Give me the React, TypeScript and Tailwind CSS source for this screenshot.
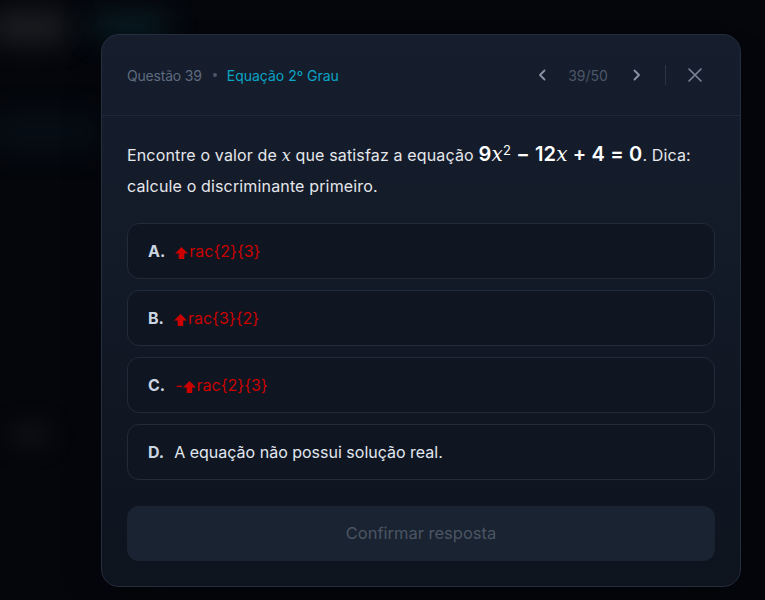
const font = { fontFamily: 'Inter, "Noto Sans", sans-serif' };

function Arrow() {
  return (
    <svg viewBox="0 0 14 13" className="inline-block w-[13px] h-[12px] -mb-[1px] mr-[1px]" fill="#cc0000">
      <path d="M7 0 L14 7 L10 7 L10 13 L4 13 L4 7 L0 7 Z" />
    </svg>
  );
}

function Frac({ a, b, neg }: { a: string; b: string; neg?: boolean }) {
  return (
    <span className="text-[#cc0000]">
      {neg && '-'}
      <Arrow />
      rac{'{'}{a}{'}'}{'{'}{b}{'}'}
    </span>
  );
}

function MathX() {
  return <span className="italic font-normal" style={{ fontFamily: '"DejaVu Serif", serif' }}>x</span>;
}

function Chevron({ dir }: { dir: 'left' | 'right' }) {
  return (
    <svg viewBox="0 0 8 12" className="w-[8px] h-[12px]" fill="none" stroke="#8a94a6" strokeWidth={1.8} strokeLinecap="round" strokeLinejoin="round">
      {dir === 'left' ? <path d="M6.5 1.5 L2 6 L6.5 10.5" /> : <path d="M1.5 1.5 L6 6 L1.5 10.5" />}
    </svg>
  );
}

const options = [
  { label: 'A.', body: <Frac a="2" b="3" /> },
  { label: 'B.', body: <Frac a="3" b="2" /> },
  { label: 'C.', body: <Frac a="2" b="3" neg /> },
  { label: 'D.', body: <span className="text-[#e2e8f0]">A equação não possui solução real.</span> },
];

export default function App() {
  return (
    <div className="relative min-h-[600px] w-full overflow-hidden bg-[#04060b]" style={font}>
      {/* blurred page behind the overlay */}
      <div className="absolute left-[-10px] top-[12px] w-[80px] h-[30px] rounded-full bg-[#2a2a2e] blur-[14px] opacity-70" />
      <div className="absolute left-[90px] top-[14px] w-[80px] h-[24px] rounded-full bg-[#0c2a33] blur-[14px] opacity-70" />
      <div className="absolute left-[-10px] top-[120px] w-[110px] h-[24px] bg-[#0d1a26] blur-[16px] opacity-60" />
      <div className="absolute left-[10px] top-[425px] w-[40px] h-[20px] rounded-full bg-[#1b1b1f] blur-[12px] opacity-60" />

      <div className="relative ml-[101px] pt-[34px]">
        <div className="w-[640px] h-[553px] rounded-[18px] border border-[#252e3d] bg-gradient-to-b from-[#161e2e] to-[#0e141e] shadow-2xl flex flex-col">
          <div className="h-[81px] shrink-0 flex items-center justify-between pl-[25px] pr-[38px] border-b border-[#1f2838]">
            <div className="flex items-center text-[14px] tracking-[-0.2px]">
              <span className="text-[#5f6b7e]">Questão 39</span>
              <span className="w-[4px] h-[4px] rounded-full bg-[#4a5568] ml-[11px] mr-[10px]" />
              <span className="text-[#0aa5c6] tracking-[0px]">Equação 2º Grau</span>
            </div>
            <div className="flex items-center">
              <button><Chevron dir="left" /></button>
              <span className="w-[40px] ml-[22px] text-center text-[14px] text-[#4b5668]">39/50</span>
              <button className="ml-[25px]"><Chevron dir="right" /></button>
              <div className="w-px h-[20px] bg-[#2c3545] ml-[24px]" />
              <button className="ml-[22px]">
                <svg viewBox="0 0 14 14" className="w-[14px] h-[14px]" stroke="#7c8698" strokeWidth={1.6} strokeLinecap="round">
                  <path d="M1 1 L13 13 M13 1 L1 13" />
                </svg>
              </button>
            </div>
          </div>

          <div className="flex flex-col px-[25px] pt-[24px] pb-[25px] flex-1">
            <p className="text-[16px] leading-[30px] tracking-[0.15px] text-[#e5e7eb]">
              Encontre o valor de <MathX /> que satisfaz a equação{' '}
              <span className="text-[20px] leading-[0] font-semibold text-white">
                9<MathX />
                <sup className="text-[13px] font-normal">2</sup> − 12<MathX /> + 4 = 0
              </span>
              . Dica: calcule o discriminante primeiro.
            </p>

            <div className="mt-[22px] flex flex-col gap-[11px]">
              {options.map((o) => (
                <button
                  key={o.label}
                  className="h-[56px] w-full rounded-[12px] border border-[#222b3a] bg-[#0f1622] px-[20px] flex items-center gap-[10px] text-left"
                >
                  <span className="text-[16px] font-bold text-[#cbd5e1]">{o.label}</span>
                  <span className="text-[16px]">{o.body}</span>
                </button>
              ))}
            </div>

            <button className="mt-[26px] h-[55px] w-full rounded-[12px] bg-[#1a2331] text-[16.5px] text-[#4b5563]">
              Confirmar resposta
            </button>
          </div>
        </div>
      </div>
    </div>
  );
}
